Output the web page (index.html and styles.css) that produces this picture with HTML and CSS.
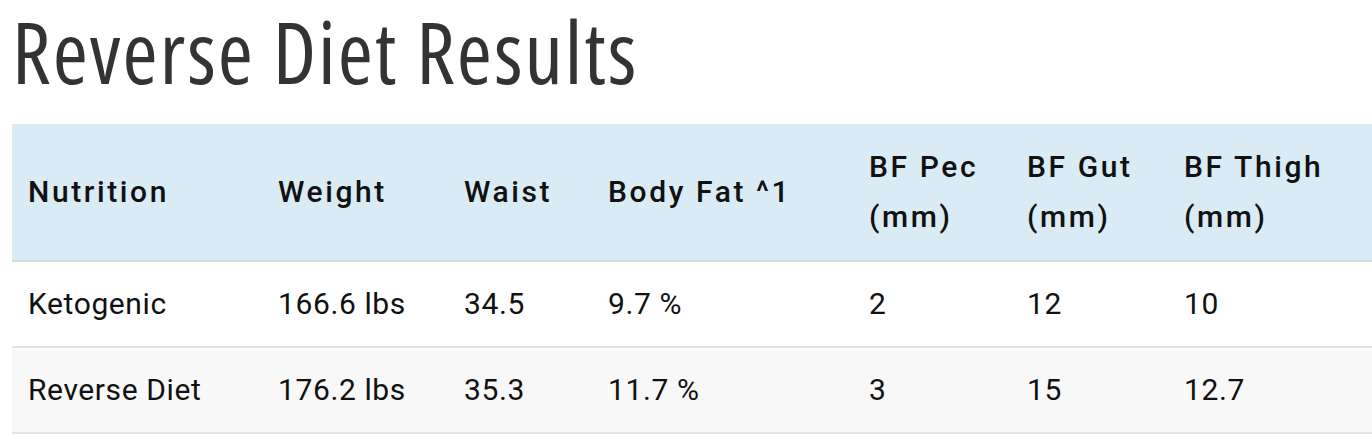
FILE: index.html
```html
<!DOCTYPE html>
<html>
<head>
<meta charset="utf-8">
<link rel="stylesheet" href="styles.css">
</head>
<body>
<main class="page">
  <h1 class="title">Reverse Diet Results</h1>
  <table class="results">
    <colgroup>
      <col class="c1"><col class="c2"><col class="c3"><col class="c4"><col class="c5"><col class="c6"><col class="c7">
    </colgroup>
    <thead>
      <tr>
        <th>Nutrition</th>
        <th>Weight</th>
        <th>Waist</th>
        <th>Body Fat ^1</th>
        <th>BF Pec<br>(mm)</th>
        <th>BF Gut<br>(mm)</th>
        <th>BF Thigh<br>(mm)</th>
      </tr>
    </thead>
    <tbody>
      <tr>
        <td>Ketogenic</td>
        <td>166.6 lbs</td>
        <td>34.5</td>
        <td>9.7 %</td>
        <td>2</td>
        <td>12</td>
        <td>10</td>
      </tr>
      <tr class="alt">
        <td>Reverse Diet</td>
        <td>176.2 lbs</td>
        <td>35.3</td>
        <td>11.7 %</td>
        <td>3</td>
        <td>15</td>
        <td>12.7</td>
      </tr>
    </tbody>
  </table>
</main>
</body>
</html>
```

FILE: styles.css
```css
html, body {
  margin: 0;
  padding: 0;
  background: #ffffff;
  overflow: hidden;
}
.page {
  padding: 0 0 0 12px;
  width: 1500px;
}
.title {
  margin: 0 0 22px 0;
  padding: 0;
  font-family: "Open Sans", sans-serif;
  font-stretch: 75%;
  font-weight: 400;
  font-size: 85px;
  line-height: 102px;
  letter-spacing: 2px;
  color: #333333;
}
.results {
  border-collapse: collapse;
  font-family: Roboto, "Noto Sans", sans-serif;
  font-size: 30px;
  letter-spacing: 0.6px;
  color: #111111;
  table-layout: fixed;
  width: 1400px;
}
.c1 { width: 250px; }
.c2 { width: 186px; }
.c3 { width: 144px; }
.c4 { width: 261px; }
.c5 { width: 158px; }
.c6 { width: 157px; }
.c7 { width: 244px; }
.results thead tr {
  background: #d9ebf5;
  border-bottom: 2px solid #d6dde2;
}
.results th {
  text-align: left;
  font-weight: 500;
  letter-spacing: 2.6px;
  line-height: 50px;
  padding: 18px 16px;
  vertical-align: middle;
}
.results td {
  line-height: 50px;
  padding: 17px 16px;
  vertical-align: middle;
}
.results tbody tr {
  border-bottom: 2px solid #e2e2e2;
}
.results tr.alt {
  background: #f8f8f8;
}
```
